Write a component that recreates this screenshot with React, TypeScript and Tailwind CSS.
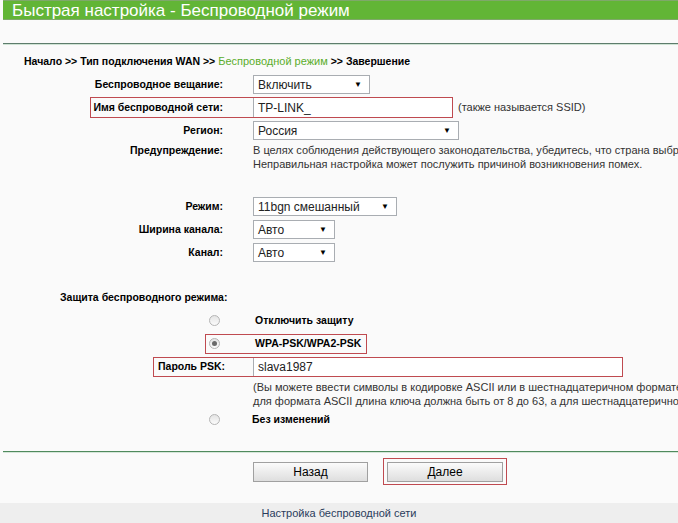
import React from 'react';

function Select({ value, w }: { value: string; w: string }) {
  return (
    <div
      className={`${w} h-[19px] bg-white border border-[#a9adb2] flex items-center justify-between pl-[4px] pr-[7px] text-[12px] text-[#222]`}
    >
      <span className="whitespace-nowrap">{value}</span>
      <span className="text-[8px] text-black">▼</span>
    </div>
  );
}

function Radio({ checked }: { checked?: boolean }) {
  return (
    <span className="w-[11px] h-[11px] rounded-full border border-[#b5b5b5] bg-gradient-to-b from-[#e4e4e4] to-[#fbfbfb] flex items-center justify-center">
      {checked && <span className="w-[5px] h-[5px] rounded-full bg-[#6a6a6a]" />}
    </span>
  );
}

function Row({ label, children }: { label: string; children: React.ReactNode }) {
  return (
    <div className="h-[23px] flex items-center">
      <div className="w-[223px] shrink-0 text-right font-bold text-[10.5px] text-black whitespace-nowrap">{label}</div>
      <div className="ml-[30px] flex items-center">{children}</div>
    </div>
  );
}

export default function App() {
  return (
    <div className="w-[678px] h-[523px] overflow-hidden bg-[#fafafa] font-['Liberation_Sans','Arial',sans-serif] flex flex-col">
      {/* title bar */}
      <div className="ml-[3px] h-[20px] shrink-0 bg-[#62b536] border-t border-b border-[#7fa86a] flex items-center pl-[9px]">
        <span className="text-white text-[17px] leading-none whitespace-nowrap">Быстрая настройка - Беспроводной режим</span>
      </div>

      <div className="ml-[3px] mt-[23px] h-[1px] shrink-0 bg-[#5d7c6c]" />
      <div className="ml-[3px] h-[1px] shrink-0 bg-[#cfe3d4]" />

      {/* breadcrumb */}
      <div className="mt-[9px] pl-[24px] h-[14px] leading-[14px] text-[10.5px] font-bold text-black whitespace-nowrap">
        Начало &gt;&gt; Тип подключения WAN &gt;&gt;{' '}
        <span className="font-normal text-[11px] text-[#5aad2c]">Беспроводной режим</span> &gt;&gt; Завершение
      </div>

      <div className="mt-[5px]">
        <Row label="Беспроводное вещание:">
          <Select value="Включить" w="w-[117px]" />
        </Row>

        <div className="h-[23px] flex items-center">
          <div className="ml-[90px] h-[21px] w-[363px] shrink-0 border border-[#bf4a50] flex items-stretch">
            <div className="w-[132px] shrink-0 flex items-center justify-end font-bold text-[10.5px] text-black whitespace-nowrap">
              Имя беспроводной сети:
            </div>
            <div className="ml-[30px] flex-1 bg-white border-l border-[#a9adb2] flex items-center pl-[4px] text-[12px] text-[#222]">
              TP-LINK_
            </div>
          </div>
          <span className="ml-[5px] text-[11px] text-[#333] whitespace-nowrap">(также называется SSID)</span>
        </div>

        <Row label="Регион:">
          <Select value="Россия" w="w-[206px]" />
        </Row>

        <div className="flex mt-[1px]">
          <div className="w-[223px] shrink-0 text-right font-bold text-[10.5px] text-black leading-[14px] whitespace-nowrap">
            Предупреждение:
          </div>
          <div className="ml-[30px] text-[11px] text-[#333] leading-[14px] whitespace-nowrap">
            <div>В целях соблюдения действующего законодательства, убедитесь, что страна выбрана правильно.</div>
            <div>Неправильная настройка может послужить причиной возникновения помех.</div>
          </div>
        </div>

        <div className="mt-[24px]">
          <Row label="Режим:">
            <Select value="11bgn смешанный" w="w-[144px]" />
          </Row>
          <Row label="Ширина канала:">
            <Select value="Авто" w="w-[82px]" />
          </Row>
          <Row label="Канал:">
            <Select value="Авто" w="w-[82px]" />
          </Row>
        </div>

        <div className="mt-[26px] pl-[60px] h-[14px] leading-[14px] font-bold text-[10.5px] text-black whitespace-nowrap">
          Защита беспроводного режима:
        </div>

        <div className="mt-[5px]">
          <div className="h-[23px] flex items-center">
            <div className="ml-[209px]">
              <Radio />
            </div>
            <span className="ml-[35px] font-bold text-[10.5px] text-black whitespace-nowrap">Отключить защиту</span>
          </div>

          <div className="h-[23px] flex items-center">
            <div className="ml-[205px] w-[162px] h-[20px] shrink-0 border border-[#bf4a50] flex items-center">
              <div className="ml-[3px]">
                <Radio checked />
              </div>
              <span className="ml-[35px] font-bold text-[10.5px] text-black whitespace-nowrap">WPA-PSK/WPA2-PSK</span>
            </div>
          </div>

          <div className="h-[23px] flex items-center">
            <div className="ml-[153px] w-[470px] h-[20px] shrink-0 border border-[#bf4a50] flex items-stretch">
              <div className="w-[99px] shrink-0 pl-[4px] flex items-center font-bold text-[10.5px] text-black whitespace-nowrap">
                Пароль PSK:
              </div>
              <div className="flex-1 bg-white border-l border-[#a9adb2] flex items-center pl-[4px] text-[12px] text-[#222]">
                slava1987
              </div>
            </div>
          </div>

          <div className="mt-[2px] pl-[253px] text-[11px] text-[#333] leading-[14px] whitespace-nowrap">
            <div>(Вы можете ввести символы в кодировке ASCII или в шестнадцатеричном формате;</div>
            <div>для формата ASCII длина ключа должна быть от 8 до 63, а для шестнадцатеричного - 8, 16.)</div>
          </div>

          <div className="h-[23px] flex items-center">
            <div className="ml-[209px]">
              <Radio />
            </div>
            <span className="ml-[32px] font-bold text-[10.5px] text-black whitespace-nowrap">Без изменений</span>
          </div>
        </div>
      </div>

      <div className="ml-[3px] mt-[20px] h-[1px] shrink-0 bg-[#4f8a5d]" />
      <div className="ml-[3px] h-[1px] shrink-0 bg-[#d5e6d9]" />

      {/* buttons */}
      <div className="mt-[5px] flex items-center h-[27px] shrink-0">
        <button className="ml-[253px] w-[115px] h-[20px] border border-[#a0a0a0] bg-gradient-to-b from-[#fbfbfb] to-[#dedede] text-[12px] text-black">
          Назад
        </button>
        <div className="ml-[15px] w-[124px] h-[27px] border border-[#bf4a50] flex items-center justify-center">
          <button className="w-[116px] h-[20px] border border-[#a0a0a0] bg-gradient-to-b from-[#fbfbfb] to-[#dedede] text-[12px] text-black">
            Далее
          </button>
        </div>
      </div>

      {/* footer */}
      <div className="mt-auto h-[20px] shrink-0 bg-[#eeeeee] flex items-center justify-center text-[11px] text-[#2a3c5c]">
        Настройка беспроводной сети
      </div>
    </div>
  );
}
